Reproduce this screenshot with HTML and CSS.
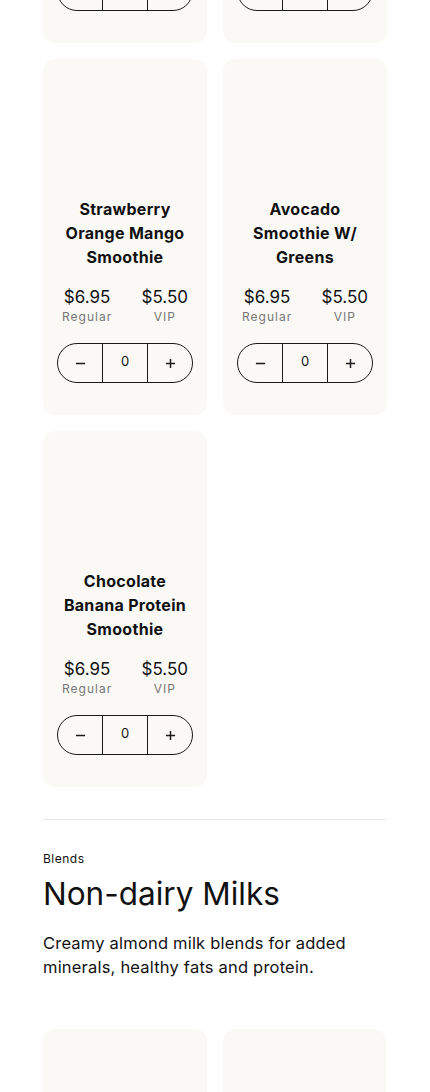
FILE: index.html
```html
<!DOCTYPE html>
<html lang="en">
<head>
    <meta charset="UTF-8">
    <title>Smoothies &amp; Blends</title>
    <link rel="stylesheet" href="styles.css">
</head>
<body>

<div class="page">
    <div class="grid scrolled">
        <div class="card">
            <div class="card-img"></div>
            <h3 class="card-title">Peanut Butter Banana Smoothie</h3>
            <div class="prices">
                <div class="price"><span class="amount">$6.95</span><span class="label">Regular</span></div>
                <div class="price"><span class="amount">$5.50</span><span class="label">VIP</span></div>
            </div>
            <div class="stepper">
                <button class="step"><svg viewBox="0 0 12 12"><path d="M1 6h10"/></svg></button>
                <span class="qty">0</span>
                <button class="step"><svg viewBox="0 0 12 12"><path d="M1 6h10M6 1v10"/></svg></button>
            </div>
        </div>
        <div class="card">
            <div class="card-img"></div>
            <h3 class="card-title">Mixed Berry Acai Smoothie</h3>
            <div class="prices">
                <div class="price"><span class="amount">$6.95</span><span class="label">Regular</span></div>
                <div class="price"><span class="amount">$5.50</span><span class="label">VIP</span></div>
            </div>
            <div class="stepper">
                <button class="step"><svg viewBox="0 0 12 12"><path d="M1 6h10"/></svg></button>
                <span class="qty">0</span>
                <button class="step"><svg viewBox="0 0 12 12"><path d="M1 6h10M6 1v10"/></svg></button>
            </div>
        </div>
        <div class="card">
            <div class="card-img"></div>
            <h3 class="card-title">Strawberry Orange Mango Smoothie</h3>
            <div class="prices">
                <div class="price"><span class="amount">$6.95</span><span class="label">Regular</span></div>
                <div class="price"><span class="amount">$5.50</span><span class="label">VIP</span></div>
            </div>
            <div class="stepper">
                <button class="step"><svg viewBox="0 0 12 12"><path d="M1 6h10"/></svg></button>
                <span class="qty">0</span>
                <button class="step"><svg viewBox="0 0 12 12"><path d="M1 6h10M6 1v10"/></svg></button>
            </div>
        </div>
        <div class="card">
            <div class="card-img"></div>
            <h3 class="card-title">Avocado Smoothie W/ Greens</h3>
            <div class="prices">
                <div class="price"><span class="amount">$6.95</span><span class="label">Regular</span></div>
                <div class="price"><span class="amount">$5.50</span><span class="label">VIP</span></div>
            </div>
            <div class="stepper">
                <button class="step"><svg viewBox="0 0 12 12"><path d="M1 6h10"/></svg></button>
                <span class="qty">0</span>
                <button class="step"><svg viewBox="0 0 12 12"><path d="M1 6h10M6 1v10"/></svg></button>
            </div>
        </div>
        <div class="card">
            <div class="card-img"></div>
            <h3 class="card-title">Chocolate Banana Protein Smoothie</h3>
            <div class="prices">
                <div class="price"><span class="amount">$6.95</span><span class="label">Regular</span></div>
                <div class="price"><span class="amount">$5.50</span><span class="label">VIP</span></div>
            </div>
            <div class="stepper">
                <button class="step"><svg viewBox="0 0 12 12"><path d="M1 6h10"/></svg></button>
                <span class="qty">0</span>
                <button class="step"><svg viewBox="0 0 12 12"><path d="M1 6h10M6 1v10"/></svg></button>
            </div>
        </div>
    </div>

    <hr class="divider">

    <div class="section-head">
        <p class="eyebrow">Blends</p>
        <h2 class="section-title">Non-dairy Milks</h2>
        <p class="section-desc">Creamy almond milk blends for added minerals, healthy fats and protein.</p>
    </div>

    <div class="grid">
        <div class="card"></div>
        <div class="card"></div>
    </div>
</div>

</body>
</html>
```

FILE: styles.css
```css
body {
    font-family: Inter, "Noto Sans", sans-serif;
    color: #111;
    background: #fff;
    margin: 0;
    padding: 0;
}
.page {
    padding: 0 44px 0 43px;
}
.grid {
    display: grid;
    grid-template-columns: 1fr 1fr;
    gap: 16px;
}
.scrolled {
    margin-top: -313px;
}
.card {
    background: #faf9f6;
    border-radius: 12px;
    padding: 14px 14px 32px;
    min-height: 310px;
    display: flex;
    flex-direction: column;
    align-items: center;
}
.card-img {
    height: 124px;
    width: 100%;
}
.card-title {
    margin: 0;
    font-size: 16px;
    font-weight: 700;
    line-height: 24px;
    letter-spacing: 0.3px;
    text-align: center;
    padding: 0 4px;
}
.prices {
    display: flex;
    justify-content: space-between;
    width: 100%;
    box-sizing: border-box;
    padding: 0 5px;
    margin-top: auto;
    padding-top: 18px;
}
.price {
    display: flex;
    flex-direction: column;
    align-items: center;
}
.amount {
    font-size: 17px;
    line-height: 20px;
}
.label {
    font-size: 12px;
    line-height: 16px;
    color: #777;
    letter-spacing: 1px;
    margin-top: 2px;
}
.stepper {
    display: grid;
    grid-template-columns: 44px 46px 44px;
    width: 136px;
    height: 40px;
    box-sizing: border-box;
    border: 1px solid #1a1a1a;
    border-radius: 20px;
    margin-top: 18px;
    overflow: hidden;
}
.step {
    background: none;
    border: 0;
    padding: 0;
    display: flex;
    align-items: center;
    justify-content: center;
}
.step svg {
    width: 11px;
    height: 11px;
    stroke: #1a1a1a;
    stroke-width: 1.6;
    fill: none;
}
.qty {
    border-left: 1px solid #1a1a1a;
    border-right: 1px solid #1a1a1a;
    font-size: 13px;
    text-align: center;
    line-height: 34px;
}
.divider {
    border: 0;
    border-top: 1px solid #e6e6e6;
    margin: 32px 0 0;
}
.section-head {
    padding-top: 31px;
    padding-bottom: 50px;
}
.eyebrow {
    margin: 0;
    font-size: 12px;
    line-height: 16px;
    letter-spacing: 0.5px;
}
.section-title {
    margin: 7px 0 0;
    font-size: 31.5px;
    font-weight: 400;
    line-height: 40px;
    letter-spacing: 0;
}
.section-desc {
    margin: 17px 0 0;
    font-size: 16.5px;
    line-height: 24px;
    letter-spacing: 0.2px;
    padding-right: 20px;
}
```
